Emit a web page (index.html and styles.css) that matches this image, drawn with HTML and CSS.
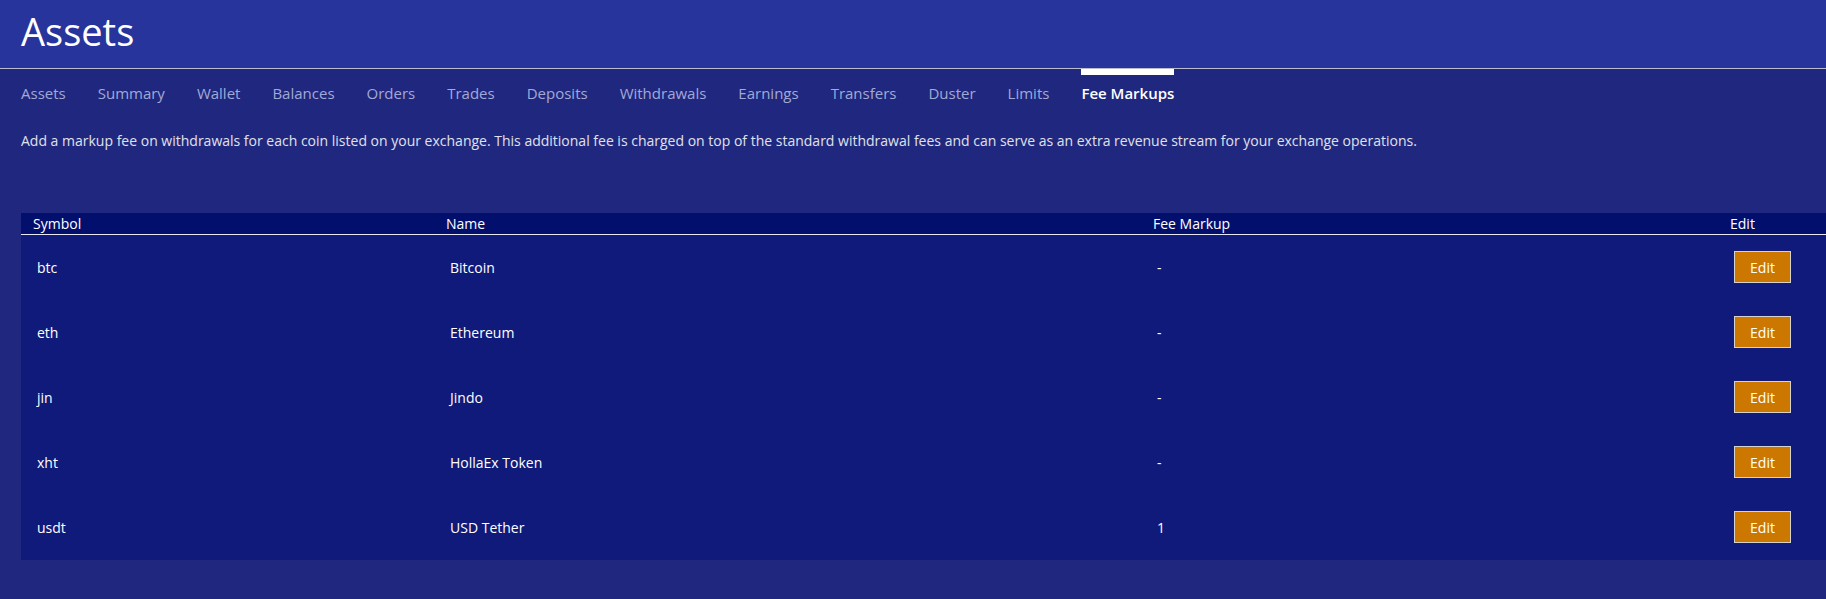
FILE: index.html
```html
<!DOCTYPE html>
<html>
<head>
<meta charset="utf-8">
<link rel="stylesheet" href="styles.css">
</head>
<body>
<header class="topbar">
  <h1 class="title">Assets</h1>
</header>
<nav class="tabs">
  <span class="tab">Assets</span>
  <span class="tab">Summary</span>
  <span class="tab">Wallet</span>
  <span class="tab">Balances</span>
  <span class="tab">Orders</span>
  <span class="tab">Trades</span>
  <span class="tab">Deposits</span>
  <span class="tab">Withdrawals</span>
  <span class="tab">Earnings</span>
  <span class="tab">Transfers</span>
  <span class="tab">Duster</span>
  <span class="tab">Limits</span>
  <span class="tab tab-active">Fee Markups</span>
</nav>
<main class="content">
  <p class="desc">Add a markup fee on withdrawals for each coin listed on your exchange. This additional fee is charged on top of the standard withdrawal fees and can serve as an extra revenue stream for your exchange operations.</p>
  <table class="grid">
    <colgroup>
      <col class="c1"><col class="c2"><col class="c3"><col class="c4">
    </colgroup>
    <thead>
      <tr><th>Symbol</th><th>Name</th><th>Fee Markup</th><th>Edit</th></tr>
    </thead>
    <tbody>
      <tr><td>btc</td><td>Bitcoin</td><td>-</td><td><button class="btn">Edit</button></td></tr>
      <tr><td>eth</td><td>Ethereum</td><td>-</td><td><button class="btn">Edit</button></td></tr>
      <tr><td>jin</td><td>Jindo</td><td>-</td><td><button class="btn">Edit</button></td></tr>
      <tr><td>xht</td><td>HollaEx Token</td><td>-</td><td><button class="btn">Edit</button></td></tr>
      <tr><td>usdt</td><td>USD Tether</td><td>1</td><td><button class="btn">Edit</button></td></tr>
    </tbody>
  </table>
</main>
</body>
</html>
```

FILE: styles.css
```css
html, body {
  margin: 0;
  padding: 0;
}
body {
  background: #1f287e;
  font-family: "Open Sans", "Noto Sans", sans-serif;
  color: #ffffff;
  overflow: hidden;
}
.topbar {
  background: #27349b;
  height: 69px;
  border-bottom: 1px solid #b9bccf;
  padding: 5px 0 0 21px;
  box-sizing: border-box;
}
.title {
  margin: 0;
  font-size: 38px;
  font-weight: 400;
  line-height: 52px;
  color: #ffffff;
}
.tabs {
  display: flex;
  gap: 32px;
  padding-left: 21px;
}
.tab {
  border-top: 6px solid transparent;
  padding-top: 8px;
  font-size: 15px;
  line-height: 20px;
  color: #a3a9d6;
}
.tab-active {
  border-top-color: #ffffff;
  color: #ffffff;
  font-weight: 600;
}
.content {
  padding-left: 21px;
}
.desc {
  margin: 28px 0 0 0;
  font-size: 14px;
  line-height: 19px;
  color: #e0e1ec;
}
.grid {
  margin-top: 63px;
  width: 1805px;
  table-layout: fixed;
  border-collapse: collapse;
  background: #101a7a;
}
.c1 { width: 413px; }
.c2 { width: 707px; }
.c3 { width: 577px; }
.c4 { width: 108px; }
.grid th {
  background: #030f6d;
  text-align: left;
  font-weight: 400;
  font-size: 14px;
  line-height: 21px;
  padding: 0 0 0 12px;
  border-bottom: 1px solid #e8e8f0;
}
.grid td {
  height: 65px;
  padding: 0 0 0 16px;
  font-size: 14px;
  vertical-align: middle;
  box-sizing: border-box;
}
.btn {
  width: 57px;
  height: 32px;
  background: #cc7700;
  border: 1px solid #d6d2cc;
  color: #ffffff;
  font-family: "Open Sans", sans-serif;
  font-size: 14px;
  padding: 0;
  display: block;
}
```
